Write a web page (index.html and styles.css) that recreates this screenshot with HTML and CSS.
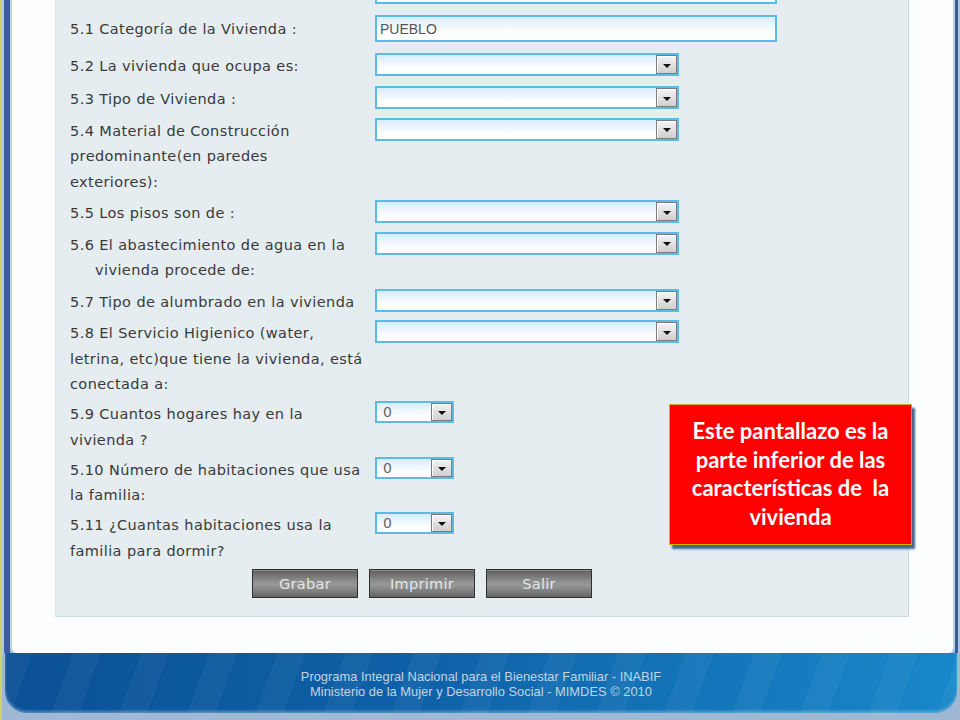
FILE: index.html
```html
<!DOCTYPE html>
<html lang="es">
<head>
<meta charset="utf-8">
<title>Características de la vivienda</title>
<link rel="stylesheet" href="styles.css">
</head>
<body>
<div class="frame">
  <div class="main">
    <div class="edge">
      <div class="sheet">
        <div class="panel">
          <div class="form">
            <div class="row row-text">
              <div class="label"></div>
              <div class="textbox"></div>
            </div>
            <div class="row row-text">
              <div class="label">5.1 Categoría de la Vivienda :</div>
              <div class="textbox">PUEBLO</div>
            </div>
            <div class="row single">
              <div class="label">5.2 La vivienda que ocupa es:</div>
              <div class="select wide"><span class="value"></span><span class="arrow"></span></div>
            </div>
            <div class="row single">
              <div class="label">5.3 Tipo de Vivienda :</div>
              <div class="select wide"><span class="value"></span><span class="arrow"></span></div>
            </div>
            <div class="row">
              <div class="label">5.4 Material de Construcción<br>predominante(en paredes<br>exteriores):</div>
              <div class="select wide"><span class="value"></span><span class="arrow"></span></div>
            </div>
            <div class="row single">
              <div class="label">5.5 Los pisos son de :</div>
              <div class="select wide"><span class="value"></span><span class="arrow"></span></div>
            </div>
            <div class="row">
              <div class="label">5.6 El abastecimiento de agua en la<br><span class="indent">vivienda procede de:</span></div>
              <div class="select wide"><span class="value"></span><span class="arrow"></span></div>
            </div>
            <div class="row single">
              <div class="label">5.7 Tipo de alumbrado en la vivienda</div>
              <div class="select wide"><span class="value"></span><span class="arrow"></span></div>
            </div>
            <div class="row">
              <div class="label">5.8 El Servicio Higienico (water,<br>letrina, etc)que tiene la vivienda, está<br>conectada a:</div>
              <div class="select wide"><span class="value"></span><span class="arrow"></span></div>
            </div>
            <div class="row">
              <div class="label">5.9 Cuantos hogares hay en la<br>vivienda ?</div>
              <div class="select small"><span class="value">0</span><span class="arrow"></span></div>
            </div>
            <div class="row">
              <div class="label">5.10 Número de habitaciones que usa<br>la familia:</div>
              <div class="select small"><span class="value">0</span><span class="arrow"></span></div>
            </div>
            <div class="row">
              <div class="label">5.11 ¿Cuantas habitaciones usa la<br>familia para dormir?</div>
              <div class="select small"><span class="value">0</span><span class="arrow"></span></div>
            </div>
          </div>
          <div class="actions">
            <button class="btn">Grabar</button>
            <button class="btn">Imprimir</button>
            <button class="btn">Salir</button>
          </div>
        </div>
      </div>
    </div>
  </div>
  <footer class="footer">
    <div>Programa Integral Nacional para el Bienestar Familiar - INABIF</div>
    <div>Ministerio de la Mujer y Desarrollo Social - MIMDES © 2010</div>
  </footer>
  <div class="callout">Este pantallazo es la parte inferior de las características de&nbsp; la vivienda</div>
</div>
</body>
</html>
```
FILE: styles.css
```css
html, body {
  margin: 0;
  padding: 0;
}
body {
  width: 960px;
  height: 720px;
  overflow: hidden;
  background: #a3bdd8;
}
.frame {
  position: relative;
  width: 960px;
  height: 720px;
  box-sizing: border-box;
  border-left: 2px solid #c7d56c;
  background: #9fb9d5;
  overflow: hidden;
}
.main {
  border-left: 2px solid #a9c7e7;
  border-right: 2px solid #a9c7e7;
}
.edge {
  border-left: 6px solid #3e5b9c;
  border-right: 3px solid #3e5b9c;
}
.sheet {
  border-left: 2px solid #b6d1ea;
  border-right: 2px solid #b6d1ea;
  background: #fdfefe;
  padding: 0 44px 36.5px 43px;
  border-radius: 0 0 6px 6px;
}
.panel {
  display: flow-root;
  background: #e5edf1;
  border-left: 1px solid #d6e6ef;
  border-right: 1px solid #c6dce9;
  border-bottom: 1px solid #c6dce9;
  padding-left: 14px;
}
.form {
  margin-top: -26.5px;
}
.row {
  display: flex;
  align-items: flex-start;
  padding: 2.25px 0;
}
.row.single {
  padding: 3.75px 0;
}
.row.row-text {
  align-items: center;
  padding: 3.5px 0 7.5px;
}
.label {
  width: 305px;
  flex: none;
  font-family: "DejaVu Sans", Verdana, sans-serif;
  font-size: 14.5px;
  letter-spacing: 0.4px;
  line-height: 25.5px;
  color: #393939;
  white-space: nowrap;
  min-height: 25.5px;
  position: relative;
  top: 1px;
}
.indent {
  padding-left: 25px;
}
.textbox {
  width: 402px;
  height: 27px;
  box-sizing: border-box;
  border: 2px solid #5bbbe4;
  background: linear-gradient(#d9effb, #ffffff 70%);
  font-family: "Liberation Sans", Arial, sans-serif;
  font-size: 14px;
  line-height: 24px;
  color: #555555;
  padding-left: 3px;
}
.select {
  position: relative;
  display: flex;
  align-items: center;
  justify-content: space-between;
  box-sizing: border-box;
  border: 2px solid #5bbbe4;
  background: linear-gradient(#d6edfa, #ffffff 75%);
  margin-top: 0;
}
.select.wide {
  width: 304px;
  height: 23px;
}
.select.small {
  width: 79px;
  height: 22px;
}
.value {
  font-family: "DejaVu Sans", Verdana, sans-serif;
  font-size: 14px;
  color: #666666;
  padding-left: 6px;
}
.arrow {
  position: relative;
  width: 21px;
  height: 19px;
  box-sizing: border-box;
  border: 1px solid #7c7c7c;
  box-shadow: inset 1px 1px 0 #ffffff;
  background: linear-gradient(#f4f4f4, #cfcfcf);
}
.select.small .arrow {
  height: 18px;
}
.arrow::after {
  content: "";
  position: absolute;
  left: 50%;
  top: 50%;
  margin-left: -4px;
  margin-top: -1px;
  border-left: 4px solid transparent;
  border-right: 4px solid transparent;
  border-top: 4px solid #111111;
}
.actions {
  display: flex;
  gap: 11px;
  margin: 3px 0 18px 182px;
}
.btn {
  width: 106px;
  height: 29px;
  box-sizing: border-box;
  border: 1px solid #2f2f2f;
  background: linear-gradient(#5e5e5e, #8c8c8c 40%, #989898 55%, #666666);
  box-shadow: inset 0 1px 0 #8a8a8a;
  font-family: "DejaVu Sans", Verdana, sans-serif;
  font-size: 14.5px;
  letter-spacing: 0.3px;
  color: #e6e6e6;
  padding: 1px 0 0;
}
.footer {
  margin: 0 3px;
  height: 60px;
  box-sizing: border-box;
  padding-top: 17px;
  border-radius: 0 0 22px 22px;
  background:
    repeating-linear-gradient(110deg, rgba(255,255,255,0.04) 0 26px, rgba(255,255,255,0) 26px 64px),
    linear-gradient(90deg, #0a5096, #0f62a8 45%, #1887c9);
  box-shadow: inset 0 -2px 3px rgba(170, 210, 240, 0.45);
  font-family: "Liberation Sans", Arial, sans-serif;
  font-size: 12.9px;
  line-height: 14.5px;
  color: #c2d4e4;
  text-align: center;
}
.callout {
  position: absolute;
  left: 667px;
  top: 404px;
  width: 243px;
  height: 141px;
  box-sizing: border-box;
  padding: 12px 6px 0;
  background: #ff0000;
  border: 1px solid #c9b400;
  box-shadow: 3px 4px 2px #44638f;
  font-family: Lato, "Open Sans", sans-serif;
  font-weight: 700;
  font-size: 22px;
  line-height: 28.7px;
  color: #ffffff;
  text-align: center;
}
```
